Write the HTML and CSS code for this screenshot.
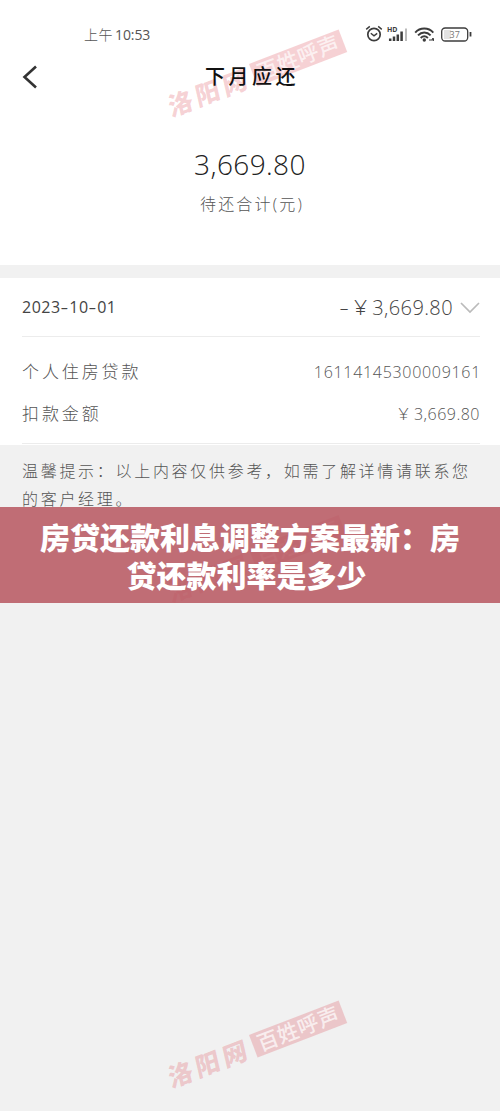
FILE: index.html
```html
<!DOCTYPE html>
<html lang="zh-CN">
<head>
<meta charset="utf-8">
<title>下月应还</title>
<link rel="stylesheet" href="styles.css">
</head>
<body>
<main class="screen">
  <header class="top">
    <div class="status">
      <span class="time"><span class="ampm">上午</span>10:53</span>
      <svg class="status-icons" width="108" height="20" viewBox="0 0 108 20" fill="none" stroke="#3c3c3c">
        <circle cx="10" cy="10.5" r="6.2" stroke-width="1.7"/>
        <path d="M6.8 9.2l3.2 2.6 3.2-2.4M2.2 5.4l3.6-3M17.8 5.4l-3.6-3" stroke-width="1.4"/>
        <text class="hd" x="23" y="8.3" textLength="10.500" lengthAdjust="spacingAndGlyphs">HD</text>
        <path d="M26.2 17v-2.5M30 17v-4.5M33.8 17V10.500M37.600 17V7.500" stroke-width="2.5"/>
        <path d="M42 17V4.500" stroke="#bbb" stroke-width="2"/>
        <path d="M51.200 8.600C56 3.200 64.500 3.200 69.300 8.600M54 11.300C57.600 7.500 63 7.500 66.600 11.300M56.700 14C58.900 11.800 61.700 11.800 63.900 14" stroke-width="1.9"/>
        <circle cx="60.300" cy="16" r="1.700" fill="#3c3c3c" stroke="none"/>
        <path d="M65 16h3l1-2v3M69.500 14.500v2.300" stroke-width="1"/>
        <rect x="77.700" y="4" width="26" height="13" rx="3.500" stroke-width="1.300"/>
        <rect x="80" y="6" width="7" height="9" fill="#e2e2e2" stroke="none"/>
        <path d="M106.500 8v4.500" stroke-width="1.800"/>
        <text class="level" x="85.500" y="13.700">37</text>
      </svg>
    </div>
    <div class="nav">
      <svg class="back" width="16" height="24" viewBox="0 0 16 24" fill="none" stroke="#333" stroke-width="2.600"><path d="M14 1.500L2.500 12 14 22.500"/></svg>
      <h1 class="title">下月应还</h1>
    </div>
    <div class="amount">3,669.80</div>
    <div class="caption">待还合计(元)</div>
  </header>

  <section class="bill">
    <div class="bill-head">
      <span class="date">2023<i class="dash">-</i>10<i class="dash">-</i>01</span>
      <span class="total"><span class="minus">-</span><span class="yen">¥</span>3,669.80</span>
      <svg class="chevron" width="20" height="12" viewBox="0 0 20 12" fill="none" stroke="#bbb" stroke-width="1.700"><path d="M1 1l9 9 9-9"/></svg>
    </div>
    <div class="row loan"><span class="label">个人住房贷款</span><span class="number">16114145300009161</span></div>
    <div class="row charge"><span class="label">扣款金额</span><span class="value"><span class="yen">¥</span>3,669.80</span></div>
  </section>

  <p class="tip">温馨提示：以上内容仅供参考，如需了解详情请联系您<br>的客户经理。</p>

  <svg class="watermarks" width="500" height="1111" viewBox="0 0 500 1111">
    <defs>
      <g id="mark">
        <g transform="translate(249 64) rotate(-21)">
          <rect class="stamp" width="96" height="24"/>
          <text class="stamp-text" x="5" y="19.500" textLength="86">百姓呼声</text>
        </g>
        <text class="site" transform="translate(171 117) rotate(-21) skewX(-8)" textLength="83">洛阳网</text>
      </g>
    </defs>
    <use href="#mark"/>
    <use href="#mark" y="485.500"/>
    <use href="#mark" y="971"/>
  </svg>

  <h2 class="banner">房贷还款利息调整方案最新：房贷还款利率是多少&nbsp;</h2>
</main>
</body>
</html>
```
FILE: styles.css
```css
* { box-sizing: border-box; }
body { margin: 0; font-family: "Open Sans", "Noto Sans CJK SC", sans-serif; font-weight: 300; }
.screen { position: relative; isolation: isolate; height: 1111px; overflow: hidden; background: #f1f1f1; }
.top { height: 265px; padding-top: 24px; background: #fff; }
.status { display: flex; justify-content: space-between; height: 21px; padding: 0 28px 0 84px; color: #555; }
.time { font-size: 14px; line-height: 21px; font-weight: 400; letter-spacing: -0.100px; }
.ampm { margin-right: 2px; font-size: 14px; letter-spacing: 0.500px; font-weight: 300; }
.hd { font: 700 7.500px "Open Sans", sans-serif; fill: #3c3c3c; stroke: none; }
.level { font: 400 9px "Open Sans", sans-serif; fill: #777; stroke: none; }
.nav { display: grid; grid-template-columns: 1fr auto 1fr; align-items: center; height: 30px; margin-top: 17px; padding: 0 22px; }
.title { position: relative; z-index: 2; grid-column: 2; margin: 0; padding-left: 4px; font-size: 20px; line-height: 30px; font-weight: 500; letter-spacing: 3.500px; color: #111; }
.amount { height: 40px; margin-top: 52px; text-align: center; font-size: 28px; line-height: 40px; letter-spacing: 0.400px; color: #222; }
.caption { margin-top: 6px; padding-left: 4px; text-align: center; font-size: 16px; line-height: 28px; letter-spacing: 2.200px; color: #555; }
.bill { height: 167px; margin-top: 13px; padding: 0 20px 0 22px; background: #fff; }
.bill-head { display: flex; align-items: center; height: 59px; border-bottom: 1px solid #ececec; }
.date { flex: 1; font-size: 16px; letter-spacing: 0.500px; color: #444; font-weight: 400; }
.dash { display: inline-block; margin-right: 1px; font-style: normal; transform: scaleX(1.500); transform-origin: center; padding: 0 1px; }
.total { font-size: 20px; letter-spacing: 0.400px; color: #444; }
.minus { display: inline-block; margin-right: 7px; transform: scaleX(1.500); }
.yen { display: inline-block; margin: 0 5px 0 1px; transform: scaleX(1.150); }
.chevron { position: relative; top: 1px; margin-left: 7px; }
.row { display: flex; align-items: center; justify-content: space-between; font-size: 16px; color: #555; }
.label { position: relative; top: -2px; font-size: 17px; letter-spacing: 2.900px; }
.number { letter-spacing: 0.700px; margin-right: -1px; }
.value { letter-spacing: 0.500px; }
.loan { height: 70px; }
.charge { height: 37px; padding-bottom: 22px; border-bottom: 1px solid #ececec; }
.tip { margin: 0; padding: 12px 20px 0 22px; font-size: 16px; line-height: 28px; letter-spacing: 2.700px; white-space: nowrap; color: #555; }
.watermarks { position: absolute; z-index: 1; inset: 0; }
.stamp { fill: #dd4d5a; fill-opacity: 0.260; }
.stamp-text { font: 500 21px "Noto Sans CJK SC", sans-serif; fill: #fff; fill-opacity: 0.700; }
.site { font: 900 25px "Noto Sans CJK SC", sans-serif; fill: #dd4d5a; fill-opacity: 0.260; }
.banner { position: absolute; z-index: 3; top: 507px; left: 0; width: 100%; height: 96px; margin: 0; padding: 10px 38px; background: rgba(184, 87, 97, 0.860); color: #fff; font: 900 30px/38px "Noto Sans CJK SC", sans-serif; text-align: center; }
```
